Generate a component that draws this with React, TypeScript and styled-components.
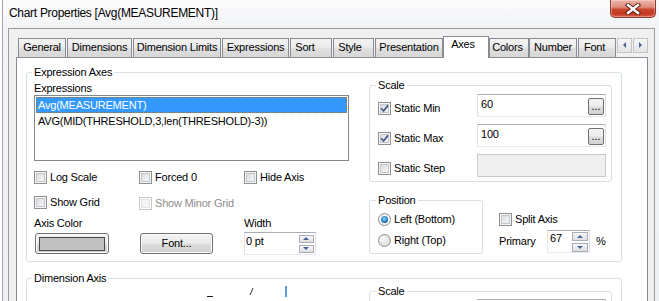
import React from "react";
import styled, { createGlobalStyle } from "styled-components";

const FONT = `"Liberation Sans", Arial, sans-serif`;

const GlobalStyle = createGlobalStyle`
  html, body { margin: 0; padding: 0; background: #ffffff; }
  body { font-family: ${FONT}; font-size: 11px; color: #000; letter-spacing: -0.2px; }
  #root { width: 659px; height: 301px; overflow: hidden; }
  *, *::before, *::after { box-sizing: border-box; }
`;

const Page = styled.div`
  width: 659px;
  height: 301px;
  padding-left: 2px;
  overflow: hidden;
  background: #fff;
`;

const Window = styled.div`
  height: 100%;
  display: flex;
  flex-direction: column;
  border-left: 1px solid #a3a6aa;
  background: linear-gradient(#fbfbfc 0px, #f1f3f5 28px, #eef0f2 100%);
`;

const TitleBar = styled.div`
  height: 28px;
  flex: none;
  display: flex;
  align-items: flex-start;
  padding: 0 3px 0 6px;
`;

const Title = styled.div`
  flex: 1;
  font-size: 12px;
  line-height: 27px;
  letter-spacing: -0.3px;
  white-space: nowrap;
`;

const CloseButton = styled.div`
  width: 46px;
  height: 18px;
  display: flex;
  align-items: center;
  justify-content: center;
  border: 1px solid #8d3b2e;
  border-top: none;
  border-radius: 0 0 5px 5px;
  background: linear-gradient(#ecb4a6 0%, #de8e7c 42%, #c9462d 55%, #c43a20 80%, #d5604a 100%);
  box-shadow: inset 0 0 0 1px rgba(255, 255, 255, 0.3);
`;

const Frame = styled.div`
  flex: 1;
  display: flex;
  padding: 0 4px 0 5px;
  min-height: 0;
`;

const Client = styled.div`
  flex: 1;
  display: flex;
  flex-direction: column;
  background: #f0f0f0;
  border: 1px solid #9c9c9c;
  border-bottom: none;
  padding-top: 7px;
  min-height: 0;
`;

const TabStrip = styled.div`
  flex: none;
  display: flex;
  align-items: flex-end;
  height: 21px;
  padding-left: 9px;
  position: relative;
  z-index: 1;
`;

const Tab = styled.div<{ $w: number; $gap: number; $active?: boolean; $shift?: number }>`
  flex: none;
  width: ${(p) => p.$w}px;
  margin-right: ${(p) => p.$gap}px;
  height: ${(p) => (p.$active ? 22 : 19)}px;
  margin-bottom: ${(p) => (p.$active ? -1 : 0)}px;
  border: 1px solid #898c95;
  border-bottom: none;
  background: ${(p) =>
    p.$active
      ? "#ffffff"
      : "linear-gradient(#f3f3f3 0%, #ebebeb 45%, #dfdfdf 55%, #d6d6d6 100%)"};
  text-align: center;
  line-height: ${(p) => (p.$active ? 15 : 17)}px;
  padding-right: ${(p) => p.$shift ?? 0}px;
  white-space: nowrap;
`;

const TabScroll = styled.div`
  display: flex;
  gap: 1px;
  align-self: flex-start;
  margin-top: 2px;
`;

const ScrollBtn = styled.div`
  width: 15px;
  height: 15px;
  border: 1px solid #c0c3c9;
  background: linear-gradient(#f6f6f6, #e4e4e4);
  display: flex;
  align-items: center;
  justify-content: center;
`;

const Panel = styled.div`
  flex: 1;
  margin: 0 6px 0 7px;
  border: 1px solid #898c95;
  border-bottom: none;
  background: #ffffff;
  padding: 8px 0 0 9px;
  min-height: 0;
  overflow: hidden;
`;

const Group = styled.fieldset<{ $w: number; $mt?: number }>`
  margin: ${(p) => p.$mt ?? 0}px 0 0 0;
  padding: 0;
  min-width: 0;
  width: ${(p) => p.$w}px;
  border: 1px solid #d5dfe5;
  border-radius: 3px;
`;

const Legend = styled.legend<{ $ml: number }>`
  margin-left: ${(p) => p.$ml}px;
  padding: 0 2px;
  font-size: 11px;
  line-height: 12px;
`;

const GroupBody = styled.div<{ $p: string; $gap?: number; $col?: boolean }>`
  padding: ${(p) => p.$p};
  display: flex;
  flex-direction: ${(p) => (p.$col ? "column" : "row")};
  gap: ${(p) => p.$gap ?? 0}px;
`;

const Column = styled.div<{ $w: number }>`
  width: ${(p) => p.$w}px;
  flex: none;
  display: flex;
  flex-direction: column;
`;

const FieldLabel = styled.div<{ $mt?: number }>`
  margin-top: ${(p) => p.$mt ?? 0}px;
  line-height: 13px;
  white-space: nowrap;
`;

const ListBox = styled.div`
  height: 66px;
  border: 1px solid #828790;
  padding: 1px;
  background: #fff;
  display: flex;
  flex-direction: column;
`;

const ListItem = styled.div<{ $sel?: boolean }>`
  height: 16px;
  line-height: 14px;
  padding-left: 1px;
  white-space: nowrap;
  border: 1px ${(p) => (p.$sel ? "dotted #b36f28" : "solid transparent")};
  background: ${(p) => (p.$sel ? "#3399ff" : "transparent")};
  color: ${(p) => (p.$sel ? "#ffffff" : "#000000")};
`;

const Grid3 = styled.div<{ $mt: number; $rowGap?: number; $h?: number }>`
  display: grid;
  grid-template-columns: 105px 105px 105px;
  row-gap: ${(p) => p.$rowGap ?? 0}px;
  margin-top: ${(p) => p.$mt}px;
  align-items: center;
  ${(p) => (p.$h ? `height: ${p.$h}px;` : "")}
`;

const CheckItem = styled.div<{ $w?: number; $dy?: number; $dim?: boolean }>`
  display: flex;
  align-items: center;
  gap: 3px;
  height: 13px;
  line-height: 13px;
  white-space: nowrap;
  margin-top: ${(p) => p.$dy ?? 0}px;
  ${(p) => (p.$w ? `width: ${p.$w}px; flex: none;` : "")}
  color: ${(p) => (p.$dim ? "#8d8d8d" : "#000")};
`;

const Spacer = styled.div<{ $w: number }>`
  width: ${(p) => p.$w}px;
  flex: none;
`;

const Box = styled.span<{ $disabled?: boolean }>`
  width: 13px;
  height: 13px;
  flex: none;
  display: inline-flex;
  align-items: center;
  justify-content: center;
  border: 1px solid ${(p) => (p.$disabled ? "#c6c6c6" : "#8e8f8f")};
  background: ${(p) =>
    p.$disabled ? "#f4f4f4" : "linear-gradient(135deg, #d3d6da 0%, #eceef0 60%, #f8f8f8 100%)"};
  box-shadow: inset 0 0 0 1px ${(p) => (p.$disabled ? "#ffffff" : "#f6f6f6")},
    inset 0 0 0 2px ${(p) => (p.$disabled ? "#e2e2e2" : "#c2c6cb")};
`;

const RadioDot = styled.span<{ $on?: boolean }>`
  width: 13px;
  height: 13px;
  flex: none;
  border-radius: 50%;
  border: 1px solid #8e8f8f;
  display: inline-flex;
  align-items: center;
  justify-content: center;
  background: ${(p) =>
    p.$on ? "#f4f4f4" : "radial-gradient(circle at 40% 35%, #fafafa 0%, #e2e2e2 55%, #cfcfcf 100%)"};
  &::after {
    content: "";
    width: 7px;
    height: 7px;
    border-radius: 50%;
    background: ${(p) =>
      p.$on
        ? "radial-gradient(circle at 45% 40%, #9fe0ff 0%, #3a93d8 40%, #0f4a86 85%, #0b3566 100%)"
        : "transparent"};
  }
`;

const Button = styled.div<{ $w: number }>`
  width: ${(p) => p.$w}px;
  height: 21px;
  margin-left: 1px;
  border: 1px solid #707070;
  border-radius: 3px;
  background: linear-gradient(#f2f2f2 0%, #ebebeb 48%, #dddddd 52%, #cfcfcf 100%);
  box-shadow: inset 0 0 0 1px #fbfbfb;
  display: flex;
  align-items: center;
  justify-content: center;
  line-height: 13px;
`;

const Swatch = styled.div<{ $c: string }>`
  width: 66px;
  height: 14px;
  border: 1px solid #4a4a4a;
  background: ${(p) => p.$c};
`;

const TextField = styled.div<{ $w: number; $disabled?: boolean }>`
  width: ${(p) => p.$w}px;
  height: 23px;
  display: flex;
  align-items: flex-start;
  border: 1px solid;
  border-color: ${(p) => (p.$disabled ? "#c9c9c9" : "#abadb3 #dbdfe6 #e3e9ef #e2e3ea")};
  background: ${(p) => (p.$disabled ? "#f0f0f0" : "#ffffff")};
`;

const FieldValue = styled.div<{ $pl: number; $pt: number }>`
  flex: 1;
  padding: ${(p) => p.$pt}px 0 0 ${(p) => p.$pl}px;
  line-height: 13px;
  white-space: nowrap;
`;

const DotsButton = styled.div`
  width: 16px;
  height: 17px;
  align-self: center;
  margin: 1px 1px 0 0;
  border: 1px solid #707070;
  border-radius: 2px;
  background: linear-gradient(#f4f4f4 0%, #ebebeb 48%, #dddddd 52%, #d2d2d2 100%);
  text-align: center;
  line-height: 15px;
  letter-spacing: 0;
`;

const SpinButtons = styled.div`
  display: flex;
  flex-direction: column;
  gap: 2px;
  align-self: center;
  margin-right: 1px;
`;

const SpinBtn = styled.div<{ $w: number; $h: number }>`
  width: ${(p) => p.$w}px;
  height: ${(p) => p.$h}px;
  border: 1px solid #a9aeb6;
  background: linear-gradient(#f7f7f7, #dedede);
  display: flex;
  align-items: center;
  justify-content: center;
`;

const ScaleRow = styled.div`
  display: flex;
  align-items: flex-start;
  height: 23px;
`;

const PosRow = styled.div`
  display: flex;
  margin-top: 12px;
`;

const SplitCol = styled.div`
  margin-left: 16px;
  padding-top: 19px;
  display: flex;
  flex-direction: column;
`;

const PrimaryRow = styled.div`
  margin-top: 4px;
  display: flex;
  align-items: center;
  height: 23px;
`;

const InlineLabel = styled.div<{ $w?: number; $ml?: number }>`
  ${(p) => (p.$w ? `width: ${p.$w}px;` : "")}
  margin-left: ${(p) => p.$ml ?? 0}px;
  line-height: 13px;
  white-space: nowrap;
`;

const Marks = styled.svg`
  display: block;
  margin-left: 172px;
`;

const Check = () => (
  <svg width="9" height="9" viewBox="0 0 9 9">
    <path d="M1.2 4.3 L3.6 7 L8 1.4" fill="none" stroke="#44568a" strokeWidth="1.7" />
  </svg>
);

const Arrow = ({ dir }: { dir: "up" | "down" | "left" | "right" }) => {
  const pts =
    dir === "up"
      ? "0,4 3,1 6,4"
      : dir === "down"
      ? "0,1 6,1 3,4"
      : dir === "left"
      ? "4,0 4,6 1,3"
      : "1,0 1,6 4,3";
  const w = dir === "up" || dir === "down" ? 7 : 5;
  const h = dir === "up" || dir === "down" ? 5 : 7;
  return (
    <svg width={w} height={h} viewBox={`0 0 ${w} ${h}`}>
      <polygon points={pts} fill="#46639b" />
    </svg>
  );
};

const CheckBox = ({
  label,
  checked,
  disabled,
  w,
  dy,
}: {
  label: string;
  checked?: boolean;
  disabled?: boolean;
  w?: number;
  dy?: number;
}) => (
  <CheckItem $w={w} $dy={dy} $dim={disabled}>
    <Box $disabled={disabled}>{checked && <Check />}</Box>
    <span>{label}</span>
  </CheckItem>
);

const Radio = ({ label, on }: { label: string; on?: boolean }) => (
  <CheckItem>
    <RadioDot $on={on} />
    <span>{label}</span>
  </CheckItem>
);

const Spinner = ({
  w,
  value,
  pl,
  pt,
  bw,
  bh,
}: {
  w: number;
  value: string;
  pl: number;
  pt: number;
  bw: number;
  bh: number;
}) => (
  <TextField $w={w}>
    <FieldValue $pl={pl} $pt={pt}>
      {value}
    </FieldValue>
    <SpinButtons>
      <SpinBtn $w={bw} $h={bh}>
        <Arrow dir="up" />
      </SpinBtn>
      <SpinBtn $w={bw} $h={bh}>
        <Arrow dir="down" />
      </SpinBtn>
    </SpinButtons>
  </TextField>
);

const scaleRows = [
  { label: "Static Min", checked: true, value: "60", disabled: false },
  { label: "Static Max", checked: true, value: "100", disabled: false },
  { label: "Static Step", checked: false, value: "", disabled: true },
];

const ScaleGroup = () => (
  <Group $w={243}>
    <Legend $ml={6}>Scale</Legend>
    <GroupBody $p="3px 5px 4px 8px" $gap={7} $col>
      {scaleRows.map((r) => (
        <ScaleRow key={r.label}>
          <CheckBox label={r.label} checked={r.checked} w={99} dy={8} />
          <TextField $w={129} $disabled={r.disabled}>
            <FieldValue $pl={3} $pt={3}>
              {r.value}
            </FieldValue>
            {!r.disabled && <DotsButton>...</DotsButton>}
          </TextField>
        </ScaleRow>
      ))}
    </GroupBody>
  </Group>
);

const DimScaleGroup = () => (
  <Group $w={243}>
    <Legend $ml={6}>Scale</Legend>
    <GroupBody $p="2px 5px 4px 8px" $col>
      <ScaleRow>
        <Spacer $w={99} />
        <TextField $w={129} />
      </ScaleRow>
    </GroupBody>
  </Group>
);

const tabs = [
  { label: "General", w: 48, gap: 1 },
  { label: "Dimensions", w: 65, gap: 1 },
  { label: "Dimension Limits", w: 88, gap: 1 },
  { label: "Expressions", w: 67, gap: 1 },
  { label: "Sort", w: 42, gap: 1, shift: 12 },
  { label: "Style", w: 41, gap: 1, shift: 7 },
  { label: "Presentation", w: 68, gap: 0 },
  { label: "Axes", w: 46, gap: 0, active: true, shift: 6 },
  { label: "Colors", w: 40, gap: 0, shift: 3 },
  { label: "Number", w: 48, gap: 1 },
  { label: "Font", w: 38, gap: 1, shift: 5 },
];

export default function App() {
  return (
    <>
      <GlobalStyle />
      <Page>
        <Window>
          <TitleBar>
            <Title>Chart Properties [Avg(MEASUREMENT)]</Title>
            <CloseButton>
              <svg width="16" height="12" viewBox="0 0 16 12">
                <path d="M3 2 L13 10 M13 2 L3 10" stroke="#5e2219" strokeWidth="4.4" strokeLinecap="square" />
                <path d="M3 2 L13 10 M13 2 L3 10" stroke="#ffffff" strokeWidth="2.4" strokeLinecap="square" />
              </svg>
            </CloseButton>
          </TitleBar>
          <Frame>
            <Client>
              <TabStrip>
                {tabs.map((t) => (
                  <Tab key={t.label} $w={t.w} $gap={t.gap} $active={t.active} $shift={t.shift}>
                    {t.label}
                  </Tab>
                ))}
                <TabScroll>
                  <ScrollBtn>
                    <Arrow dir="left" />
                  </ScrollBtn>
                  <ScrollBtn>
                    <Arrow dir="right" />
                  </ScrollBtn>
                </TabScroll>
              </TabStrip>
              <Panel>
                <Group $w={596}>
                  <Legend $ml={5}>Expression Axes</Legend>
                  <GroupBody $p="1px 9px 6px 7px" $gap={20}>
                    <Column $w={315}>
                      <FieldLabel $mt={3}>Expressions</FieldLabel>
                      <ListBox>
                        <ListItem $sel>Avg(MEASUREMENT)</ListItem>
                        <ListItem>AVG(MID(THRESHOLD,3,len(THRESHOLD)-3))</ListItem>
                      </ListBox>
                      <Grid3 $mt={10} $rowGap={11}>
                        <CheckBox label="Log Scale" />
                        <CheckBox label="Forced 0" />
                        <CheckBox label="Hide Axis" />
                        <CheckBox label="Show Grid" />
                        <CheckBox label="Show Minor Grid" disabled dy={2} />
                      </Grid3>
                      <Grid3 $mt={7}>
                        <FieldLabel>Axis Color</FieldLabel>
                        <span />
                        <FieldLabel>Width</FieldLabel>
                      </Grid3>
                      <Grid3 $mt={2} $h={23}>
                        <Button $w={74}>
                          <Swatch $c="#c0c0c0" />
                        </Button>
                        <Button $w={73}>Font...</Button>
                        <Spinner w={72} value="0 pt" pl={1} pt={2} bw={15} bh={8} />
                      </Grid3>
                    </Column>
                    <Column $w={243}>
                      <ScaleGroup />
                      <PosRow>
                        <Group $w={114}>
                          <Legend $ml={6}>Position</Legend>
                          <GroupBody $p="7px 0 6px 8px" $gap={8} $col>
                            <Radio label="Left (Bottom)" on />
                            <Radio label="Right (Top)" />
                          </GroupBody>
                        </Group>
                        <SplitCol>
                          <CheckBox label="Split Axis" />
                          <PrimaryRow>
                            <InlineLabel $w={48}>Primary</InlineLabel>
                            <Spinner w={43} value="67" pl={2} pt={1} bw={16} bh={9} />
                            <InlineLabel $ml={6}>%</InlineLabel>
                          </PrimaryRow>
                        </SplitCol>
                      </PosRow>
                    </Column>
                  </GroupBody>
                </Group>
                <Group $w={596} $mt={10}>
                  <Legend $ml={5}>Dimension Axis</Legend>
                  <GroupBody $p="1px 9px 0 7px" $gap={20}>
                    <Column $w={315}>
                      <Marks width="84" height="14" viewBox="0 0 84 14">
                        <line x1="1" y1="11.5" x2="7" y2="11.5" stroke="#1a1a1a" strokeWidth="1" />
                        <line x1="44" y1="10" x2="47" y2="3" stroke="#2b3650" strokeWidth="1" />
                        <rect x="79" y="1" width="2" height="11" fill="#5b9bd5" />
                      </Marks>
                    </Column>
                    <Column $w={243}>
                      <DimScaleGroup />
                    </Column>
                  </GroupBody>
                </Group>
              </Panel>
            </Client>
          </Frame>
        </Window>
      </Page>
    </>
  );
}
